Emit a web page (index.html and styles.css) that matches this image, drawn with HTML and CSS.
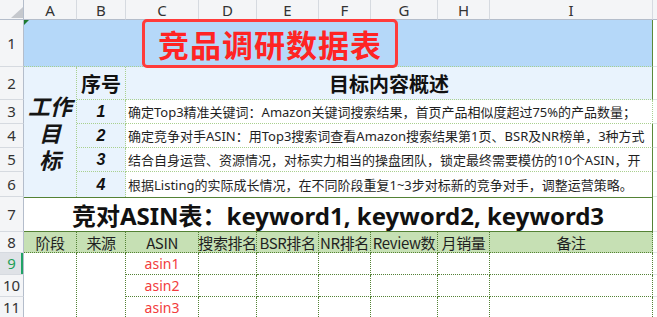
FILE: index.html
```html
<!DOCTYPE html>
<html lang="zh-CN">
<head>
<meta charset="utf-8">
<title>竞品调研数据表</title>
<link rel="stylesheet" href="styles.css">
</head>
<body>
<div class="sheet">
  <div class="corner r0 cH"><svg width="24" height="20" viewBox="0 0 24 20"><polygon points="23,7 23,18 11,18" fill="#c5c8cd"/></svg></div>
  <div class="colhdr r0 cA">A</div>
  <div class="colhdr r0 cB">B</div>
  <div class="colhdr r0 cC">C</div>
  <div class="colhdr r0 cD">D</div>
  <div class="colhdr r0 cE">E</div>
  <div class="colhdr r0 cF">F</div>
  <div class="colhdr r0 cG">G</div>
  <div class="colhdr r0 cH2">H</div>
  <div class="colhdr r0 cI">I</div>
  <div class="colhdr r0 cJ"></div>

  <div class="rowhdr r1 cH">1</div>
  <div class="rowhdr r2 cH">2</div>
  <div class="rowhdr r3 cH">3</div>
  <div class="rowhdr r4 cH">4</div>
  <div class="rowhdr r5 cH">5</div>
  <div class="rowhdr r6 cH">6</div>
  <div class="rowhdr r7 cH">7</div>
  <div class="rowhdr r8 cH">8</div>
  <div class="rowhdr rowhdr-active r9 cH">9</div>
  <div class="rowhdr r10 cH">10</div>
  <div class="rowhdr r11 cH">11</div>

  <div class="banner r1 span-AI">
    <span class="flag"></span>
    <div class="title-box">竞品调研数据表</div>
  </div>

  <div class="goal rows-2-6 cA"><span class="goal-line">工作</span><span class="goal-line">目</span><span class="goal-line">标</span></div>
  <div class="seq-head r2 cB">序号</div>
  <div class="goal-head r2 span-CI">目标内容概述</div>

  <div class="seq r3 cB">1</div>
  <div class="desc desc-first r3 span-CI">确定Top3精准关键词：Amazon关键词搜索结果，首页产品相似度超过75%的产品数量；</div>
  <div class="seq r4 cB">2</div>
  <div class="desc r4 span-CI">确定竞争对手ASIN：用Top3搜索词查看Amazon搜索结果第1页、BSR及NR榜单，3种方式</div>
  <div class="seq r5 cB">3</div>
  <div class="desc r5 span-CI">结合自身运营、资源情况，对标实力相当的操盘团队，锁定最终需要模仿的10个ASIN，开</div>
  <div class="seq seq-last r6 cB">4</div>
  <div class="desc desc-last r6 span-CI">根据Listing的实际成长情况，在不同阶段重复1~3步对标新的竞争对手，调整运营策略。</div>

  <div class="subtitle r7 span-AI">竞对ASIN表：keyword1, keyword2, keyword3</div>

  <div class="th r8 cA">阶段</div>
  <div class="th r8 cB">来源</div>
  <div class="th r8 cC">ASIN</div>
  <div class="th r8 cD">搜索排名</div>
  <div class="th r8 cE">BSR排名</div>
  <div class="th r8 cF">NR排名</div>
  <div class="th r8 cG">Review数</div>
  <div class="th r8 cH2">月销量</div>
  <div class="th th-last r8 cI">备注</div>

  <div class="cell rows-9-11 cA"></div>
  <div class="cell rows-9-11 cB"></div>

  <div class="cell asin r9 cC">asin1</div>
  <div class="cell r9 cD"></div>
  <div class="cell r9 cE"></div>
  <div class="cell r9 cF"></div>
  <div class="cell r9 cG"></div>
  <div class="cell r9 cH2"></div>
  <div class="cell r9 cI"></div>

  <div class="cell asin r10 cC">asin2</div>
  <div class="cell r10 cD"></div>
  <div class="cell r10 cE"></div>
  <div class="cell r10 cF"></div>
  <div class="cell r10 cG"></div>
  <div class="cell r10 cH2"></div>
  <div class="cell r10 cI"></div>

  <div class="cell asin r11 cC">asin3</div>
  <div class="cell r11 cD"></div>
  <div class="cell r11 cE"></div>
  <div class="cell r11 cF"></div>
  <div class="cell r11 cG"></div>
  <div class="cell r11 cH2"></div>
  <div class="cell r11 cI"></div>

  <div class="gutter r1 cJ"></div>
  <div class="gutter r2 cJ"></div>
  <div class="gutter r3 cJ"></div>
  <div class="gutter r4 cJ"></div>
  <div class="gutter r5 cJ"></div>
  <div class="gutter r6 cJ"></div>
  <div class="gutter r7 cJ"></div>
  <div class="gutter r8 cJ"></div>
  <div class="gutter r9 cJ"></div>
  <div class="gutter r10 cJ"></div>
  <div class="gutter r11 cJ"></div>
</div>
</body>
</html>
```

FILE: styles.css
```css
html, body {
  margin: 0;
  padding: 0;
  background: #ffffff;
  overflow: hidden;
}

body {
  font-family: "Noto Sans CJK SC", "Noto Sans", sans-serif;
  color: #1a1a1a;
}

.sheet {
  display: grid;
  grid-template-columns: 24px 53px 49px 73px 58px 62px 52px 67px 52px 163px 4px;
  grid-template-rows: 20px 47px 33px 24px 24px 24px 25px 35px 21px 22px 22px 22px;
  width: 657px;
}

.sheet > div {
  box-sizing: border-box;
  min-width: 0;
}

/* grid placement */
.r0 { grid-row: 1; }
.r1 { grid-row: 2; }
.r2 { grid-row: 3; }
.r3 { grid-row: 4; }
.r4 { grid-row: 5; }
.r5 { grid-row: 6; }
.r6 { grid-row: 7; }
.r7 { grid-row: 8; }
.r8 { grid-row: 9; }
.r9 { grid-row: 10; }
.r10 { grid-row: 11; }
.r11 { grid-row: 12; }

.cH { grid-column: 1; }
.cA { grid-column: 2; }
.cB { grid-column: 3; }
.cC { grid-column: 4; }
.cD { grid-column: 5; }
.cE { grid-column: 6; }
.cF { grid-column: 7; }
.cG { grid-column: 8; }
.cH2 { grid-column: 9; }
.cI { grid-column: 10; }
.cJ { grid-column: 11; }

.span-AI { grid-column: 2 / 11; }
.span-CI { grid-column: 4 / 11; }
.rows-2-6 { grid-row: 3 / 8; }
.rows-9-11 { grid-row: 10 / 13; }

/* headers */
.corner {
  background: #f4f5f7;
  border-right: 1px solid #b4bdcb;
  border-bottom: 1px solid #b4bdcb;
}
.corner svg { display: block; }

.colhdr {
  background: #f4f5f7;
  border-right: 1px solid #d6dae0;
  border-bottom: 1px solid #b4bdcb;
  font-family: "Noto Sans", "Open Sans", sans-serif;
  font-size: 15px;
  color: #333333;
  display: flex;
  align-items: center;
  justify-content: center;
  line-height: 1;
  padding-top: 1px;
}
.colhdr.cJ { border-right: none; }

.rowhdr {
  background: #f4f5f7;
  border-right: 1px solid #b4bdcb;
  border-bottom: 1px solid #d6dae0;
  font-family: "Noto Sans", "Open Sans", sans-serif;
  font-size: 15px;
  color: #333333;
  display: flex;
  align-items: center;
  justify-content: center;
  line-height: 1;
}
.rowhdr-active {
  background: #dfe2e7;
  color: #1e9f57;
  box-shadow: inset -2px 0 0 #21a366;
}

/* row 1 */
.banner {
  position: relative;
  background: #b5d8f9;
  border-bottom: 1px dotted #a9d08e;
  border-right: 1px solid #5b8a3a;
}
.flag {
  position: absolute;
  left: 0;
  top: 0;
  width: 0;
  height: 0;
  border-top: 5px solid #1f7a31;
  border-right: 5px solid transparent;
}
.title-box {
  position: absolute;
  left: 118px;
  top: -1px;
  width: 256px;
  height: 49px;
  box-sizing: border-box;
  border: 3px solid #ff3b3b;
  border-radius: 5px;
  z-index: 2;
  display: flex;
  align-items: center;
  justify-content: center;
  font-size: 31px;
  font-weight: 700;
  color: #ff2424;
  letter-spacing: 1px;
  line-height: 1;
}

/* rows 2-6 */
.goal {
  background: #e9f3fd;
  border-right: 1px dotted #a9d08e;
  display: flex;
  flex-direction: column;
  align-items: center;
  justify-content: center;
  font-size: 22px;
  font-weight: 700;
  font-style: italic;
  color: #151515;
}
.goal-line {
  display: block;
  height: 27px;
  line-height: 27px;
  overflow: visible;
}

.seq-head {
  background: #e9f3fd;
  border-right: 1px dotted #a9d08e;
  border-bottom: 1px dotted #a9d08e;
  display: flex;
  align-items: center;
  justify-content: center;
  font-size: 20px;
  font-weight: 700;
  color: #111111;
}

.goal-head {
  background: #e9f3fd;
  border-right: 1px solid #5b8a3a;
  border-bottom: 1px dotted #a9d08e;
  display: flex;
  align-items: center;
  justify-content: center;
  font-size: 20px;
  font-weight: 700;
  color: #111111;
}

.seq {
  background: #e9f3fd;
  border-right: 1px dotted #a9d08e;
  border-bottom: 1px dotted #a9d08e;
  display: flex;
  align-items: center;
  justify-content: center;
  font-family: "Liberation Sans", Arial, sans-serif;
  font-size: 16px;
  font-weight: 700;
  font-style: italic;
  color: #111111;
}
.seq-last { border-bottom: none; }

.desc {
  background: #ffffff;
  border-right: 1px solid #5b8a3a;
  border-bottom: 1px dotted #a9d08e;
  display: flex;
  align-items: center;
  padding-left: 2px;
  overflow: hidden;
  white-space: nowrap;
  font-family: "Noto Sans", "Noto Sans CJK SC", sans-serif;
  font-size: 13px;
  color: #1f1f1f;
}
.desc-first { border-right: 1px dotted #a9d08e; }
.desc-last { border-bottom: none; }

/* row 7 */
.subtitle {
  background: #ffffff;
  border-top: 1px solid #548235;
  border-bottom: 1px solid #548235;
  border-right: 1px solid #548235;
  display: flex;
  align-items: center;
  justify-content: center;
  white-space: nowrap;
  font-family: "Noto Sans", "Noto Sans CJK SC", sans-serif;
  font-size: 24px;
  font-weight: 700;
  color: #111111;
}

/* row 8 */
.th {
  background: #c6e0b4;
  border-right: 1px dotted #548235;
  border-bottom: 1px dotted #548235;
  display: flex;
  align-items: center;
  justify-content: center;
  white-space: nowrap;
  overflow: visible;
  font-size: 15px;
  color: #1f1f1f;
  letter-spacing: -0.4px;
}

/* data rows */
.cell {
  background: #ffffff;
  border-right: 1px dotted #548235;
  border-bottom: 1px dotted #548235;
}
.cell.rows-9-11 { border-bottom: none; }

.asin {
  display: flex;
  align-items: center;
  justify-content: center;
  font-family: "Noto Sans", "Open Sans", sans-serif;
  font-size: 14px;
  color: #f23c3c;
}

.gutter {
  background: #ffffff;
  border-bottom: 1px solid #e2e4e8;
}
```
